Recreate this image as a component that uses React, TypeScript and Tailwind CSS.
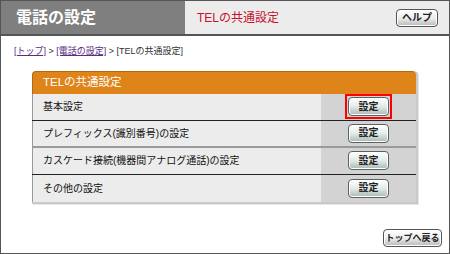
const jp = "font-['Liberation_Sans','Noto_Sans_CJK_JP',sans-serif]"

function GrayButton({ label, className = '' }: { label: string; className?: string }) {
  return (
    <button
      className={`flex items-center justify-center whitespace-nowrap rounded-[4px] border border-[#5a6360] bg-gradient-to-b from-[#ffffff] via-[#e3ebe8] to-[#a9b9b4] font-bold leading-none text-[#222] shadow-[inset_0_0_0_1px_#fff] ${className}`}
    >
      {label}
    </button>
  )
}

const rows = [
  { label: '基本設定', active: true, line: 'border-b border-[#222]' },
  { label: 'プレフィックス(識別番号)の設定', active: false, line: 'border-b-2 border-[#9a9a9a]' },
  { label: 'カスケード接続(機器間アナログ通話)の設定', active: false, line: 'border-b border-[#222]' },
  { label: 'その他の設定', active: false, line: '' },
]

export default function App() {
  return (
    <div className={`flex h-[254px] w-[450px] flex-col border border-[#555] bg-white ${jp}`}>
      {/* Header */}
      <div className="flex h-[35px] shrink-0 border-b-2 border-[#555]">
        <div className="flex w-[184px] items-center bg-[#7f7f7f] pl-[15px] text-[16px] font-bold text-white">
          電話の設定
        </div>
        <div className="flex flex-1 items-center justify-between bg-[#ececec] pl-[12px] pr-[11px]">
          <span className="text-[12px] text-[#c8102e]">TELの共通設定</span>
          <GrayButton label="ヘルプ" className="h-[18px] w-[42px] border-[#555] via-[#eeeeee] to-[#b9b9b9] text-[10px]" />
        </div>
      </div>

      {/* Breadcrumb */}
      <div className="mt-[9px] pl-[13px] text-[9px] text-[#333]">
        <a className="text-[#5a2c83] underline">[トップ]</a>
        <span> &gt; </span>
        <a className="text-[#5a2c83] underline">[電話の設定]</a>
        <span> &gt; [TELの共通設定]</span>
      </div>

      {/* Panel */}
      <div className="ml-[31px] mt-[12px] w-[386px] rounded-t-[4px] border-r-2 border-b-2 border-[#c9c9c9] shadow-[1px_1px_0_#e6e6e6]">
        <div className="flex h-[23px] items-center rounded-t-[4px] border-t border-l border-[#b06a12] bg-[#df8418] pl-[10px] text-[11.5px] text-white">
          TELの共通設定
        </div>
        {rows.map((r) => (
          <div key={r.label} className={`flex h-[27px] ${r.line}`}>
            <div className="flex flex-1 items-center border-l border-[#999] bg-[#ececec] pl-[10px] text-[10px] text-[#111]">
              {r.label}
            </div>
            <div className="flex w-[95px] items-center justify-center bg-[#d3d3d3]">
              {r.active ? (
                <div className="border-2 border-[#ff0000] p-[1px]">
                  <GrayButton label="設定" className="h-[19px] w-[41px] text-[10px]" />
                </div>
              ) : (
                <GrayButton label="設定" className="h-[19px] w-[41px] text-[10px]" />
              )}
            </div>
          </div>
        ))}
      </div>

      {/* Footer */}
      <div className="flex flex-1 items-end justify-end pb-[6px] pr-[7px]">
        <GrayButton label="トップへ戻る" className="h-[18px] w-[59px] border-[#555] via-[#eeeeee] to-[#b9b9b9] text-[9px]" />
      </div>
    </div>
  )
}
